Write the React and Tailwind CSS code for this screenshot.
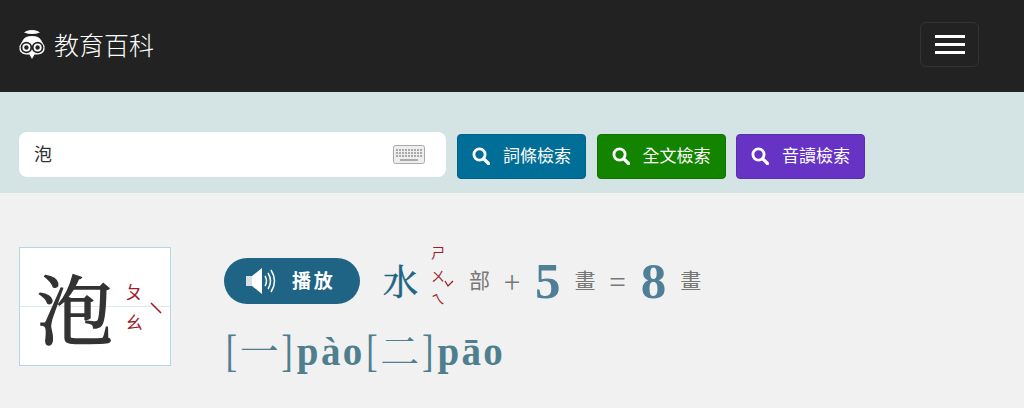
import React from 'react';

const cjk = { fontFamily: '"Noto Sans CJK TC", "Noto Sans", sans-serif' };
const serif = { fontFamily: '"Noto Serif CJK TC", "Noto Sans CJK TC", serif' };
const latin = { fontFamily: '"Liberation Serif", serif' };

const OwlLogo = () => (
    <svg width="28" height="30" viewBox="0 0 28 30" className="shrink-0">
        <path d="M8 2.2 Q14 0 20 2.2 L22 3.5 Q14 6.5 6 3.5 Z" fill="#fff" />
        <path d="M5 11 Q7 7 14 7 Q21 7 23 11 L26.5 17 Q27.5 25 20 25.5 L16.5 25.5 L14 30 L11.5 25.5 L8 25.5 Q0.5 25 1.5 17 Z" fill="#fff" />
        <circle cx="8.4" cy="18.5" r="5.8" fill="#222" />
        <circle cx="19.6" cy="18.5" r="5.8" fill="#222" />
        <circle cx="8.4" cy="18.5" r="4" fill="#fff" />
        <circle cx="19.6" cy="18.5" r="4" fill="#fff" />
        <circle cx="8.4" cy="18.5" r="2.2" fill="#222" />
        <circle cx="19.6" cy="18.5" r="2.2" fill="#222" />
    </svg>
);

const Keyboard = () => (
    <svg width="32" height="19" viewBox="0 0 32 19">
        <rect x="0.5" y="0.5" width="31" height="18" rx="2" fill="#eee" stroke="#aaa" />
        <path d="M3 5h26M3 8h26M3 11h26" stroke="#aaa" strokeWidth="2" strokeDasharray="2 1" />
        <path d="M7 15h18" stroke="#aaa" strokeWidth="2" />
    </svg>
);

const Speaker = () => (
    <svg width="35" height="28" viewBox="0 0 35 28" className="shrink-0">
        <path d="M1 9h6l10-8v26l-10-8H1z" fill="#fff" />
        <path d="M1 9h6v10H1z" fill="#d5dfe4" />
        <path d="M20 9q3 5 0 10M23 6q5 8 0 16M26 3q7 11 0 22" fill="none" stroke="#fff" strokeWidth="1.5" />
    </svg>
);

const SearchIcon = () => (
    <svg width="18" height="18" viewBox="0 0 18 18" className="shrink-0">
        <circle cx="7.5" cy="7.5" r="5.6" fill="none" stroke="#fff" strokeWidth="2.8" />
        <path d="M11.8 11.8 L16.5 16.5" stroke="#fff" strokeWidth="3.2" strokeLinecap="round" />
    </svg>
);

const SearchButton = ({ label, color, border }) => (
    <button className={`flex h-[45px] w-[129px] items-center gap-[13px] rounded border pb-[1px] pl-[14px] text-white ${color} ${border}`}>
        <SearchIcon />
        <span className="mb-[3px] text-[17px] leading-none" style={cjk}>{label}</span>
    </button>
);

const Num = ({ children }) => (
    <span className="ml-[1px] text-[51px] leading-none font-bold text-[#4f7f97]" style={latin}>{children}</span>
);

const Small = ({ children }) => (
    <span className="mb-[3px] text-[21px] leading-none text-[#777]" style={cjk}>{children}</span>
);

const Op = ({ children }) => (
    <span className="mb-[3px] text-[30px] leading-none font-light text-[#777]" style={cjk}>{children}</span>
);

export default function App() {
    return (
        <div className="h-[408px] overflow-hidden bg-[#f1f1f1]" style={cjk}>
            {/* Navbar */}
            <div className="flex h-[92px] items-center justify-between bg-[#222] pb-[4px] pl-[18px] pr-[45px]">
                <div className="flex items-center gap-[8px]">
                    <OwlLogo />
                    <span className="text-[25px] leading-none font-light text-white">教育百科</span>
                </div>
                <div className="flex h-[45px] w-[59px] flex-col items-center justify-center gap-[5px] rounded-md border border-[#333]">
                    <span className="h-[3px] w-[30px] bg-white" />
                    <span className="h-[3px] w-[30px] bg-white" />
                    <span className="h-[3px] w-[30px] bg-white" />
                </div>
            </div>

            {/* Search */}
            <div className="flex h-[101px] items-start bg-[#d4e4e5] pl-[19px] pt-[40px]">
                <div className="flex h-[45px] w-[427px] items-center justify-between rounded-lg bg-white pl-[15px] pr-[21px]">
                    <span className="mb-[3px] text-lg leading-none text-[#333]">泡</span>
                    <Keyboard />
                </div>
                <div className="ml-[11px] flex gap-[10.5px] pt-[2px]">
                    <SearchButton label="詞條檢索" color="bg-[#006e96]" border="border-[#00618a]" />
                    <SearchButton label="全文檢索" color="bg-[#138400]" border="border-[#107300]" />
                    <SearchButton label="音讀檢索" color="bg-[#6633c4]" border="border-[#5a2cb0]" />
                </div>
            </div>

            {/* Content */}
            <div className="flex pl-[19px] pt-[54px]">
                <div className="relative flex h-[119px] w-[152px] items-center border border-[#b4d7e3] bg-white pl-[17px]">
                    <div className="absolute inset-x-0 top-[58px] h-px bg-[#dcebf0]" />
                    <span className="relative text-[76px] leading-none text-[#333] [-webkit-text-stroke:1.5px_#333]" style={serif}>泡</span>
                    <div className="relative ml-[12px] mb-[1px] flex flex-col gap-[10px] text-[#a01c2c]">
                        <span className="text-[18px] leading-[20px]">ㄆ</span>
                        <span className="text-[18px] leading-[20px]">ㄠ</span>
                    </div>
                    <svg width="12" height="12" viewBox="0 0 12 12" className="absolute left-[130px] top-[54px]">
                        <path d="M1 1 L11 11" stroke="#a01c2c" strokeWidth="1.6" />
                    </svg>
                </div>

                <div className="ml-[53px] -mt-[6px] flex flex-col">
                    <div className="flex items-center">
                        <div className="flex h-[46px] w-[136px] items-center gap-[12px] rounded-full bg-[#1f6484] pb-[1px] pl-[21px] text-white">
                            <Speaker />
                            <span className="mb-[2px] text-[19px] leading-none font-bold tracking-[0.15em]">播放</span>
                        </div>
                        <span className="ml-[23px] mb-[2px] text-[35px] leading-none text-[#1f6484] [-webkit-text-stroke:0.6px_#1f6484]" style={serif}>水</span>
                        <div className="relative ml-[13px] mb-[11px] flex flex-col text-[#a01c2c]">
                            <span className="text-[14px] leading-[23px]">ㄕ</span>
                            <span className="text-[14px] leading-[23px]">ㄨ</span>
                            <span className="text-[14px] leading-[23px]">ㄟ</span>
                            <svg width="10" height="8" viewBox="0 0 10 8" className="absolute left-[13px] top-[39px]">
                                <path d="M1 1 L4 6 L9 1" fill="none" stroke="#a01c2c" strokeWidth="1.3" />
                            </svg>
                        </div>
                        <div className="ml-[24px] flex items-center gap-[14px]">
                            <Small>部</Small>
                            <Op>+</Op>
                            <Num>5</Num>
                            <Small>畫</Small>
                            <Op>=</Op>
                            <Num>8</Num>
                            <Small>畫</Small>
                        </div>
                    </div>
                    <div className="mt-[8px] flex items-baseline text-[39px] leading-none tracking-[0.06em] text-[#4f7f8f]" style={latin}>
                        <span style={serif}>[一]</span>
                        <span className="font-bold">pào</span>
                        <span style={serif}>[二]</span>
                        <span className="font-bold">pāo</span>
                    </div>
                </div>
            </div>
        </div>
    );
}
